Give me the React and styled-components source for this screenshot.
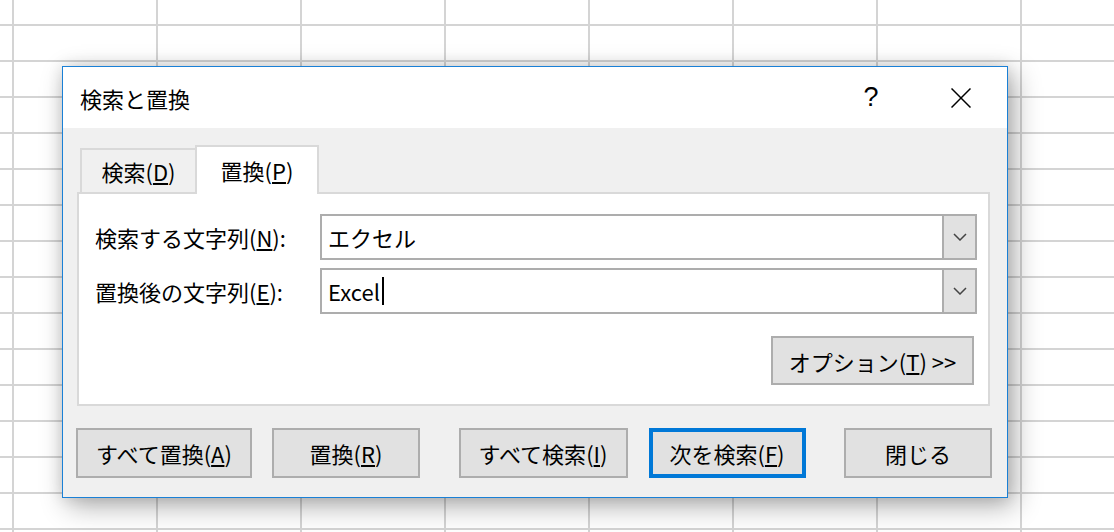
import styled, { createGlobalStyle } from "styled-components";

const GlobalStyle = createGlobalStyle`
  html, body {
    margin: 0;
    padding: 0;
  }
  body {
    font-family: "Noto Sans CJK JP", "Noto Sans", sans-serif;
    color: #000;
  }
  *, *::before, *::after {
    box-sizing: border-box;
  }
`;

const fields = [
    { label: "検索する文字列", key: "N", value: "エクセル" },
    { label: "置換後の文字列", key: "E", value: "Excel", caret: true },
];

const buttonGroups = [
    { gap: 20, items: [{ text: "すべて置換", key: "A", w: 176 }, { text: "置換", key: "R", w: 148 }] },
    { gap: 21, items: [{ text: "すべて検索", key: "I", w: 169 }, { text: "次を検索", key: "F", w: 157, primary: true }] },
    { gap: 0, items: [{ text: "閉じる", w: 148 }] },
];

const Chevron = () => (
    <svg width="14" height="8" viewBox="0 0 14 8">
        <polyline points="1,1 7,7 13,1" fill="none" stroke="#444" strokeWidth="1.5" />
    </svg>
);

const CloseIcon = () => (
    <svg width="20" height="20" viewBox="0 0 20 20">
        <line x1="0.5" y1="0.5" x2="19.5" y2="19.5" stroke="#000" strokeWidth="1.5" />
        <line x1="19.5" y1="0.5" x2="0.5" y2="19.5" stroke="#000" strokeWidth="1.5" />
    </svg>
);

const Accel = ({ k }) => (
    <>(<Key>{k}</Key>)</>
);

export default function App() {
    return (
        <Sheet>
            <GlobalStyle />
            <Dialog>
                <TitleBar>
                    <Title>検索と置換</Title>
                    <HelpButton>?</HelpButton>
                    <CloseButton><CloseIcon /></CloseButton>
                </TitleBar>
                <Body>
                    <TabRow>
                        <Tab>検索<Accel k="D" /></Tab>
                        <Tab $active>置換<Accel k="P" /></Tab>
                    </TabRow>
                    <Panel>
                        <FieldGrid>
                            {fields.map((f) => (
                                <Field key={f.key}>
                                    <Label>{f.label}<Accel k={f.key} />:</Label>
                                    <Combo>
                                        <ComboText>
                                            {f.value}
                                            {f.caret && <Caret />}
                                        </ComboText>
                                        <DropButton><Chevron /></DropButton>
                                    </Combo>
                                </Field>
                            ))}
                        </FieldGrid>
                        <OptionsRow>
                            <Button $w={203} $h={49}>オプション<Accel k="T" />&nbsp;&gt;&gt;</Button>
                        </OptionsRow>
                    </Panel>
                    <ButtonRow>
                        {buttonGroups.map((g, i) => (
                            <ButtonGroup key={i} $gap={g.gap}>
                                {g.items.map((b) => (
                                    <Button key={b.text} $w={b.w} $h={50} $primary={b.primary}>
                                        {b.text}{b.key && <Accel k={b.key} />}
                                    </Button>
                                ))}
                            </ButtonGroup>
                        ))}
                    </ButtonRow>
                </Body>
            </Dialog>
        </Sheet>
    );
}

const Sheet = styled.div`
    width: 1114px;
    height: 532px;
    overflow: hidden;
    padding: 66px 0 0 62px;
    background-color: #fff;
    background-image:
        linear-gradient(to right, #d4d4d4 2px, transparent 2px),
        linear-gradient(to bottom, #d4d4d4 2px, transparent 2px);
    background-size: 144px 100%, 100% 36px;
    background-position: 12px 0, 0 24px;
`;

const Dialog = styled.div`
    width: 946px;
    height: 432px;
    border: 1px solid #1a80d6;
    background: #f0f0f0;
    display: flex;
    flex-direction: column;
    box-shadow: 6px 8px 26px rgba(0, 0, 0, 0.32), 0 0 14px rgba(0, 0, 0, 0.12);
`;

const TitleBar = styled.div`
    height: 61px;
    flex-shrink: 0;
    background: #fff;
    display: flex;
    align-items: center;
    padding-left: 17px;
`;

const Title = styled.div`
    flex: 1;
    font-size: 22px;
    line-height: 1;
`;

const HelpButton = styled.div`
    width: 46px;
    margin-right: 44px;
    text-align: center;
    font-family: "Liberation Sans", Arial, sans-serif;
    font-size: 27px;
    line-height: 1;
`;

const CloseButton = styled.div`
    width: 46px;
    margin-right: 23px;
    display: flex;
    justify-content: center;
    align-items: center;
`;

const Body = styled.div`
    flex: 1;
    padding: 17px 17px 19px 14px;
    display: flex;
    flex-direction: column;
`;

const TabRow = styled.div`
    height: 47px;
    flex-shrink: 0;
    display: flex;
    align-items: flex-end;
    padding-left: 3px;
`;

const Tab = styled.div`
    width: ${(p) => (p.$active ? 124 : 115)}px;
    height: ${(p) => (p.$active ? 49 : 44)}px;
    display: flex;
    align-items: center;
    justify-content: center;
    font-size: 22px;
    line-height: 1;
    border-top: 2px solid #d9d9d9;
    border-left: 2px solid #d9d9d9;
    border-right: ${(p) => (p.$active ? "2px solid #d9d9d9" : "none")};
    background: ${(p) => (p.$active ? "#fff" : "#f0f0f0")};
    margin-bottom: ${(p) => (p.$active ? -2 : 0)}px;
    padding-bottom: ${(p) => (p.$active ? 2 : 0)}px;
    position: relative;
    z-index: ${(p) => (p.$active ? 1 : 0)};
`;

const Key = styled.span`
    text-decoration: underline;
    text-decoration-thickness: 2px;
    text-underline-offset: 2px;
`;

const Panel = styled.div`
    height: 214px;
    flex-shrink: 0;
    border: 2px solid #d9d9d9;
    background: #fff;
    padding: 20px 11px 19px 16px;
    display: flex;
    flex-direction: column;
`;

const FieldGrid = styled.div`
    display: grid;
    grid-template-columns: 225px 1fr;
    grid-auto-rows: 46px;
    row-gap: 8px;
`;

const Field = styled.div`
    display: contents;
`;

const Label = styled.div`
    align-self: center;
    font-size: 22px;
    line-height: 1;
`;

const Combo = styled.div`
    display: flex;
    border: 2px solid #adadad;
    background: #fff;
`;

const ComboText = styled.div`
    flex: 1;
    display: flex;
    align-items: center;
    padding-left: 6px;
    font-size: 22px;
    line-height: 1;
`;

const Caret = styled.span`
    display: inline-block;
    width: 2px;
    height: 28px;
    margin-left: 2px;
    background: #000;
`;

const DropButton = styled.div`
    width: 33px;
    border-left: 2px solid #adadad;
    background: #e1e1e1;
    display: flex;
    align-items: center;
    justify-content: center;
`;

const OptionsRow = styled.div`
    margin-top: 22px;
    display: flex;
    justify-content: flex-end;
    padding-right: 3px;
`;

const Button = styled.div`
    width: ${(p) => p.$w}px;
    height: ${(p) => p.$h}px;
    display: flex;
    align-items: center;
    justify-content: center;
    background: #e1e1e1;
    border: ${(p) => (p.$primary ? "4px solid #0078d7" : "2px solid #adadad")};
    font-size: 22px;
    line-height: 1;
    white-space: nowrap;
`;

const ButtonRow = styled.div`
    margin: 22px -2px 0 -1px;
    display: flex;
    justify-content: space-between;
`;

const ButtonGroup = styled.div`
    display: flex;
    gap: ${(p) => p.$gap}px;
`;
